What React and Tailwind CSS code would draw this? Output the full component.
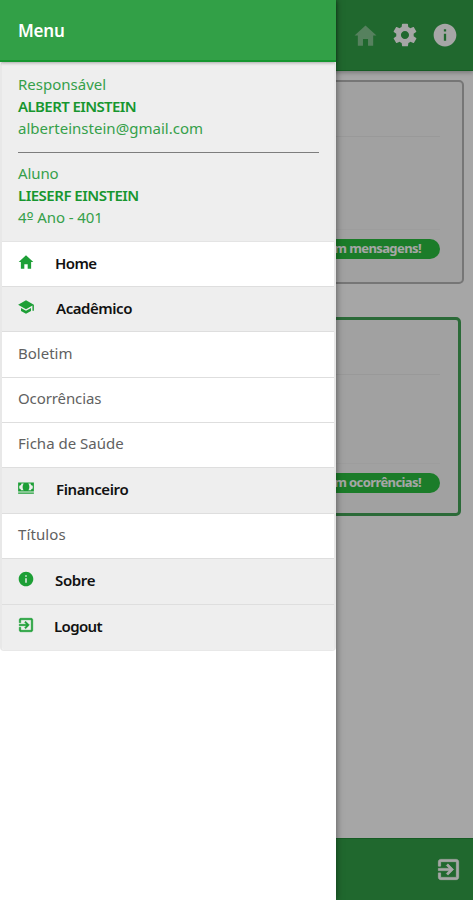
import { IoMdHome, IoMdSchool, IoMdCash, IoMdInformationCircle, IoMdExit, IoMdSettings } from 'react-icons/io';

const menuItems = [
  { label: 'Home', icon: IoMdHome, row: 'h-[45px] bg-white', text: 'ml-[20px] tracking-[-0.6px]' },
  { label: 'Acadêmico', icon: IoMdSchool, row: 'h-[45px] bg-[#eeeeee]', text: 'ml-[21px] tracking-[-0.45px]' },
  { label: 'Boletim', row: 'h-[46px] bg-white', text: 'tracking-[0px]' },
  { label: 'Ocorrências', row: 'h-[45px] bg-white pb-[5px]', text: 'tracking-[-0.1px]' },
  { label: 'Ficha de Saúde', row: 'h-[45px] bg-white pb-[5px]', text: 'tracking-[0px]' },
  { label: 'Financeiro', icon: IoMdCash, row: 'h-[46px] bg-[#eeeeee]', text: 'ml-[21px] tracking-[-0.4px]' },
  { label: 'Títulos', row: 'h-[45px] bg-white pb-[5px]', text: 'tracking-[0.1px]' },
  { label: 'Sobre', icon: IoMdInformationCircle, row: 'h-[46px] bg-[#eeeeee]', text: 'ml-[20px] tracking-[-0.35px]' },
  { label: 'Logout', icon: IoMdExit, bold: true, row: 'h-[45px] bg-[#eeeeee] pb-[4px]', text: 'ml-[19px] tracking-[-0.65px]' },
];

const MenuItem = ({ item }) => {
  const Icon = item.icon;
  return (
    <button className={`flex w-full items-center border-b border-[#dedede] pl-4 text-left text-[15px] leading-5 last:border-b-0 ${item.row.includes('pb-') ? '' : 'pb-[3px]'} ${item.row}`}>
      {Icon && (
        <Icon
          className="-ml-px -mt-[2px] h-[18px] w-[18px] flex-shrink-0 text-[#1d9f36]"
          stroke="currentColor"
          strokeWidth={item.bold ? 14 : 0}
        />
      )}
      <span className={`${Icon ? 'font-semibold text-[#111111]' : 'text-[#616161]'} ${item.text}`}>{item.label}</span>
    </button>
  );
};

const SideMenu = () => (
  <aside className="absolute inset-y-0 left-0 flex w-[336px] flex-col bg-white shadow-[0_0_7px_rgba(0,0,0,0.5)]">
    <header className="relative z-10 flex h-[62px] flex-shrink-0 items-center border-b-2 border-[#15962f] bg-[#32a047] pl-[18px] pt-[2px] shadow-[0_1px_3px_rgba(0,0,0,0.3)]">
      <h1 className="text-[17px] font-semibold tracking-[-0.2px] text-white">Menu</h1>
    </header>
    <div className="overflow-hidden rounded-[4px] border-x-2 border-b border-[#e8e8e8]">
      <section className="h-[180px] border-b border-[#e4e4e4] bg-[#eeeeee] pl-4 pr-[15px] pt-[11px] text-[15px] leading-[22px] text-[#35a04a]">
        <p><span className="tracking-[0px]">Responsável</span></p>
        <p className="font-semibold text-[#17962f]"><span className="tracking-[-0.6px]">ALBERT EINSTEIN</span></p>
        <p><span className="tracking-[0.02px]">alberteinstein@gmail.com</span></p>
        <hr className="mt-[13px] mb-[9px] border-[#7d7d7d]" />
        <p><span className="tracking-[-0.1px]">Aluno</span></p>
        <p className="font-semibold text-[#17962f]"><span className="tracking-[-0.5px]">LIESERF EINSTEIN</span></p>
        <p><span className="tracking-[-0.1px]">4<span className="font-['DejaVu_Sans',sans-serif]">º</span> Ano - 401</span></p>
      </section>
      <nav>
        {menuItems.map((item) => (
          <MenuItem key={item.label} item={item} />
        ))}
      </nav>
    </div>
  </aside>
);

const Card = ({ badge, className }) => (
  <section className={`flex flex-col rounded-[5px] bg-[#f7f7f7] ${className}`}>
    <div className="h-[55px] border-b border-[#ebebeb]" />
    <div className="flex-1 border-b border-[#f1f1f1]" />
    <div className="mt-[9px] flex h-[20px] w-[200px] items-center justify-end self-end rounded-full bg-[#2abf40] pr-[19px] text-[13px] font-bold tracking-[-0.6px] text-white">
      <span className="whitespace-nowrap">{badge}</span>
    </div>
  </section>
);

export default function App() {
  return (
    <div className="relative h-[900px] w-full overflow-hidden bg-white font-['Noto_Sans',sans-serif]">
      <div className="flex h-full flex-col">
        <header className="flex h-[71px] flex-shrink-0 items-center justify-end gap-[12px] border-b border-[#238c38] bg-[#32a047] pr-[14px] text-white shadow-[0_2px_4px_rgba(0,0,0,0.25)]">
          <IoMdHome className="h-[27px] w-[27px] opacity-40" />
          <IoMdSettings className="h-[28px] w-[28px]" />
          <IoMdInformationCircle className="h-[28px] w-[28px]" />
        </header>
        <main className="flex flex-1 flex-col pl-2 pt-[9px]">
          <Card badge="Você não tem mensagens!" className="mr-[9px] h-[204px] border-2 border-[#b5b5b5] pr-[22px] pb-[23px]" />
          <Card badge="Você não tem ocorrências!" className="mr-[12px] mt-[33px] h-[199px] border-[3px] border-[#43a456] pb-[20px] pr-[18px]" />
        </main>
        <footer className="flex h-[62px] flex-shrink-0 items-center justify-end border-t border-[#238c38] bg-[#32a047] pr-[11px] text-white">
          <IoMdExit className="h-[27px] w-[27px]" stroke="currentColor" strokeWidth="14" />
        </footer>
      </div>
      <div className="absolute inset-0 bg-black/35" />
      <SideMenu />
    </div>
  );
}
